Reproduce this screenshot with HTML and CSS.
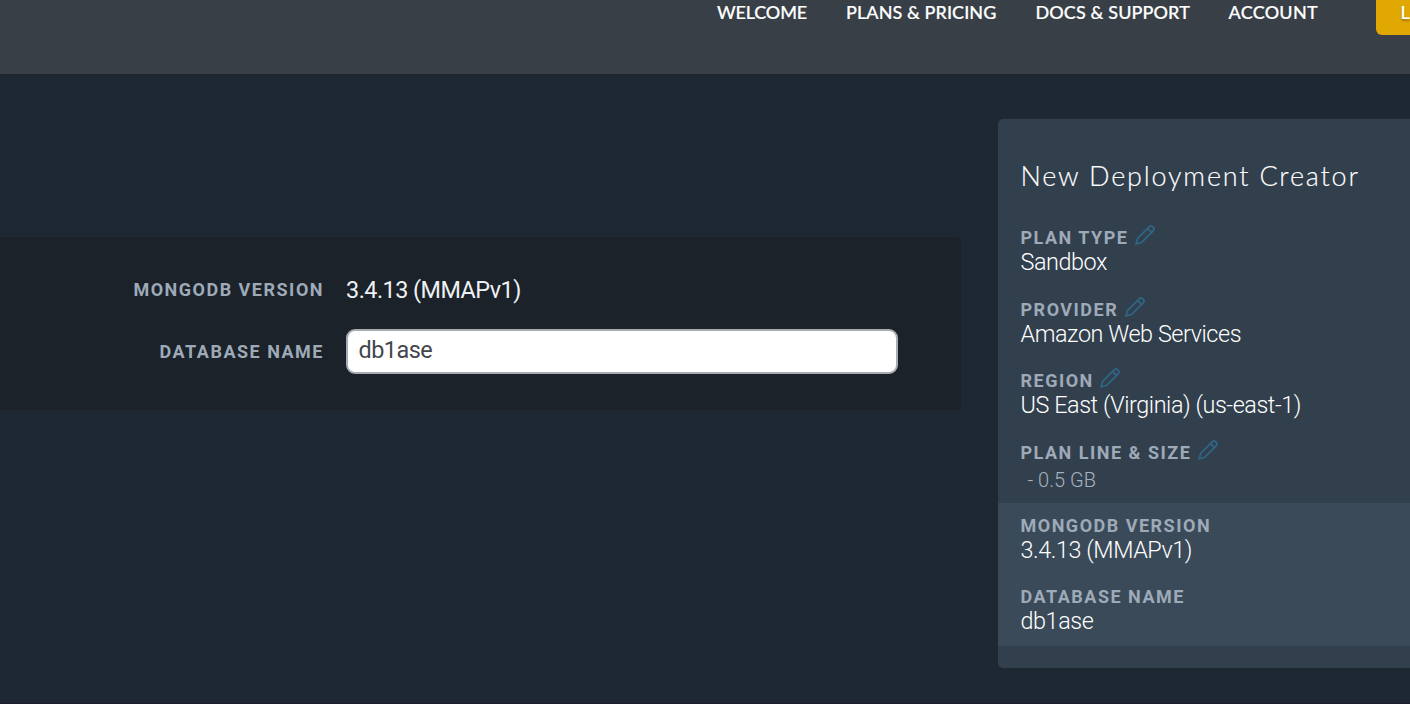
FILE: index.html
```html
<!DOCTYPE html>
<html lang="en">
<head>
<meta charset="utf-8">
<title>New Deployment Creator</title>
<link rel="stylesheet" href="styles.css">
</head>
<body>
<svg class="defs" width="0" height="0" aria-hidden="true">
  <symbol id="pencil" viewBox="0 0 22 22">
    <path d="M2 20 3.6 14.4 15.2 2.8 Q16.8 1.2 18.4 2.6 L19.4 3.6 Q20.8 5.2 19.2 6.8 L7.6 18.4 Z M13.6 4.6 17.4 8.4"/>
  </symbol>
</svg>
<header class="topbar">
  <nav class="nav">
    <a class="nav-item welcome">WELCOME</a>
    <a class="nav-item plans">PLANS &amp; PRICING</a>
    <a class="nav-item docs">DOCS &amp; SUPPORT</a>
    <a class="nav-item account">ACCOUNT</a>
    <a class="logout">L</a>
  </nav>
</header>
<main class="layout">
  <section class="form">
    <div class="form-row">
      <span class="label form-label">MONGODB VERSION</span>
      <span class="form-value">3.4.13 (MMAPv1)</span>
    </div>
    <div class="form-row">
      <label class="label form-label" for="db">DATABASE NAME</label>
      <input class="field" id="db" type="text" value="db1ase">
    </div>
  </section>
  <aside class="summary">
    <h2 class="title">New Deployment Creator</h2>
    <div class="item"><div class="label">PLAN TYPE<svg class="pencil"><use href="#pencil"/></svg></div><div class="value">Sandbox</div></div>
    <div class="item"><div class="label">PROVIDER<svg class="pencil"><use href="#pencil"/></svg></div><div class="value">Amazon Web Services</div></div>
    <div class="item"><div class="label">REGION<svg class="pencil"><use href="#pencil"/></svg></div><div class="value">US East (Virginia) (us-east-1)</div></div>
    <div class="item last"><div class="label">PLAN LINE &amp; SIZE<svg class="pencil"><use href="#pencil"/></svg></div><div class="size">- 0.5 GB</div></div>
    <div class="current">
      <div class="item"><div class="label">MONGODB VERSION</div><div class="value">3.4.13 (MMAPv1)</div></div>
      <div class="item"><div class="label">DATABASE NAME</div><div class="value">db1ase</div></div>
    </div>
  </aside>
</main>
</body>
</html>
```
FILE: styles.css
```css
* { box-sizing: border-box; }
body {
  margin: 0;
  height: 704px;
  overflow: hidden;
  border-bottom: 1px solid #1b1d2b;
  background: #1e2832;
  font-family: Roboto, "Liberation Sans", sans-serif;
  color: #fff;
}
.defs { display: block; }
.topbar { height: 74px; background: #383f46; overflow: hidden; }
.nav {
  display: flex;
  align-items: flex-start;
  padding-left: 717px;
  font: 500 18px/24px Lato, sans-serif;
  -webkit-text-stroke: .2px #fff;
  white-space: nowrap;
}
.nav-item { flex: none; }
.welcome { width: 129px; letter-spacing: -.17px; }
.plans { width: 189.5px; letter-spacing: .07px; }
.docs { width: 193px; letter-spacing: .12px; }
.account { width: 147.5px; letter-spacing: .25px; }
.logout {
  flex: 1;
  height: 35px;
  padding-left: 24.5px;
  border-radius: 0 0 0 6px;
  background: #e0a800;
  text-shadow: 0 2px 2px rgba(90, 60, 0, .5);
}
.layout {
  display: grid;
  grid-template-columns: 961px 412px;
  column-gap: 37px;
  align-items: start;
}
.form {
  height: 173px;
  margin-top: 163px;
  padding-top: 30px;
  border-radius: 0 4px 4px 0;
  background: #1b222a;
}
.form-row { display: flex; align-items: center; height: 45px; margin-bottom: 17px; }
.form-label { width: 324px; text-align: right; margin-right: 22px; }
.form-value { font-size: 23.4px; line-height: 28px; color: #eef1f4; letter-spacing: -.52px; }
.field {
  width: 552px;
  height: 45px;
  padding: 0 10.5px 3px;
  border: 2px solid #a9abb1;
  border-radius: 9px;
  background: #fff;
  color: #42474d;
  font: 400 23.4px/28px Roboto, sans-serif;
  letter-spacing: -.5px;
}
.label {
  font-size: 18px;
  line-height: 22px;
  font-weight: 700;
  letter-spacing: 1.5px;
  color: #9eaab8;
  white-space: nowrap;
}
.summary {
  height: 549px;
  margin-top: 45px;
  border-radius: 5px 0 0 5px;
  background: #32404e;
  white-space: nowrap;
}
.title {
  margin: 0;
  padding: 40px 0 32px 22.5px;
  font: 300 27px/34px Lato, sans-serif;
  letter-spacing: 1.8px;
  -webkit-text-stroke: .15px #fff;
}
.item { height: 71.6px; padding: 2px 0 0 22.5px; }
.item .label { height: 22px; }
.value { margin-top: -1px; font-size: 23.4px; line-height: 28px; font-weight: 300; letter-spacing: -.43px; }
.size { padding: 4px 0 0 7px; font-size: 20px; line-height: 24px; font-weight: 300; color: #a5b1bd; }
.last { height: 63px; }
.current { height: 143px; padding-top: 10px; background: #3a4a59; }
.pencil {
  width: 22px;
  height: 22px;
  margin: -3px 0 3px 5.5px;
  vertical-align: top;
  fill: none;
  stroke: #2f6483;
  stroke-width: 1.8;
  stroke-linejoin: round;
  stroke-linecap: round;
}
```
